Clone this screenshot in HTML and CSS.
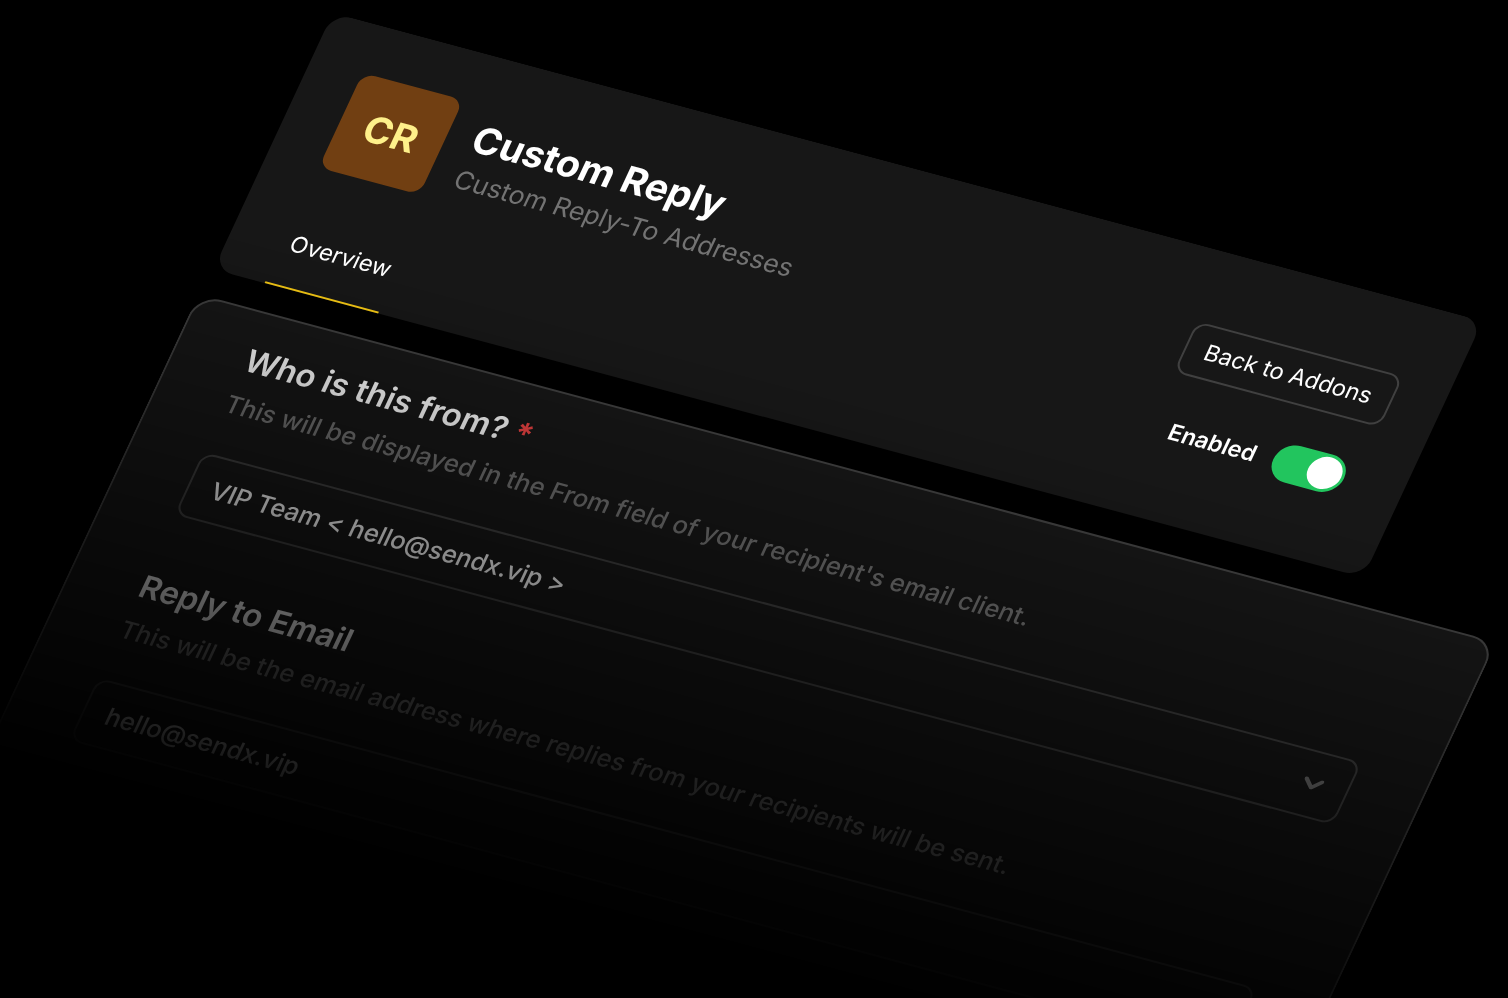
FILE: index.html
```html
<!DOCTYPE html>
<html lang="en">
<head>
  <meta charset="UTF-8">
  <title>Custom Reply</title>
  <link rel="stylesheet" href="styles.css">
</head>
<body>
  <main class="scene">
    <header class="addon">
      <div class="addon-main">
        <div class="addon-info">
          <div class="logo">CR</div>
          <div>
            <h1>Custom Reply</h1>
            <p class="tagline">Custom Reply-To Addresses</p>
          </div>
        </div>
        <nav class="tabs">
          <a class="tab" href="#overview">Overview</a>
        </nav>
      </div>
      <div class="addon-actions">
        <button class="back" type="button">Back to Addons</button>
        <div class="enable">
          <label for="enabled">Enabled</label>
          <input class="switch" type="checkbox" id="enabled" checked>
        </div>
      </div>
    </header>

    <form class="panel" id="overview">
      <div class="field">
        <label for="from">Who is this from? <span class="required">*</span></label>
        <p class="hint">This will be displayed in the From field of your recipient's email client.</p>
        <div class="select">
          <select id="from">
            <option>VIP Team &lt; hello@sendx.vip &gt;</option>
          </select>
          <svg class="chevron" viewBox="0 0 20 12" aria-hidden="true">
            <path d="M2 2l8 8 8-8" />
          </svg>
        </div>
      </div>
      <div class="field">
        <label for="reply">Reply to Email</label>
        <p class="hint">This will be the email address where replies from your recipients will be sent.</p>
        <input class="text" type="text" id="reply" value="hello@sendx.vip">
      </div>
    </form>
  </main>
</body>
</html>
```
FILE: styles.css
```css
* {
  box-sizing: border-box;
}

body {
  height: 100vh;
  margin: 0;
  padding: 12px 0 0 330px;
  overflow: hidden;
  background: #000;
  color: #fff;
  font-family: Inter, "Liberation Sans", sans-serif;
}

h1,
p {
  margin: 0;
}

input,
select,
button {
  font-family: inherit;
}

/* tilted plane, fades out towards the bottom */
.scene {
  width: calc(100vw - 169px);
  transform: rotate(20deg) skew(-5deg, -5deg);
  transform-origin: 0 0;
  -webkit-mask-image: linear-gradient(#000 235px, transparent 815px);
  mask-image: linear-gradient(#000 235px, transparent 815px);
}

/* header card */
.addon {
  display: flex;
  justify-content: space-between;
  margin: 0 150px 28px 3px;
  padding: 0 49px 0 53px;
  border-radius: 20px;
  background: #171717;
}

.addon-info {
  display: flex;
  align-items: center;
  gap: 26px;
  padding-top: 51px;
}

.logo {
  display: flex;
  align-items: center;
  justify-content: center;
  width: 104px;
  height: 104px;
  border-radius: 13px;
  background: #713f12;
  color: #fef08a;
  font-size: 38px;
  font-weight: 700;
}

h1 {
  font-size: 38px;
  line-height: 52px;
  font-weight: 700;
}

.tagline {
  color: #737373;
  font-size: 26px;
  line-height: 37px;
}

.tabs {
  display: flex;
  margin-top: 36px;
}

.tab {
  padding: 29px 7px 27px;
  border-bottom: 2px solid #facc15;
  color: #fff;
  font-size: 23px;
  line-height: 33px;
  text-decoration: none;
}

.addon-actions {
  display: flex;
  flex-direction: column;
  align-items: flex-end;
  gap: 39px;
  padding-top: 75px;
}

.back {
  height: 56px;
  padding: 0 19px;
  border: 2px solid #404040;
  border-radius: 13px;
  background: none;
  color: #fff;
  font-size: 23px;
}

.enable {
  display: flex;
  align-items: center;
  gap: 18px;
  padding-right: 11px;
  font-size: 23px;
  font-weight: 600;
}

.switch {
  display: flex;
  justify-content: flex-end;
  width: 73px;
  height: 40px;
  margin: 0;
  padding: 3px;
  border-radius: 20px;
  background: #22c55e;
  appearance: none;
}

.switch::before {
  content: "";
  width: 34px;
  height: 34px;
  border-radius: 50%;
  background: #fff;
}

/* settings form */
.panel {
  height: 900px;
  padding: 28px 70px;
  border: 2px solid #404040;
  border-radius: 24px;
  background: #171717;
}

.field {
  margin-bottom: 56px;
}

.field label {
  display: block;
  margin-bottom: 3px;
  font-size: 32px;
  line-height: 44px;
  font-weight: 600;
}

.required {
  color: #ef4444;
  font-weight: 700;
}

.hint {
  margin-bottom: 32px;
  color: #737373;
  font-size: 25px;
  line-height: 44px;
  font-weight: 500;
}

.select {
  position: relative;
}

.select select,
.text {
  display: block;
  width: 100%;
  height: 69px;
  padding: 0 22px;
  border: 2px solid #404040;
  border-radius: 13px;
  background: none;
  color: #fff;
  font-size: 25px;
  font-weight: 500;
  appearance: none;
}

.chevron {
  position: absolute;
  top: 28px;
  right: 26px;
  width: 20px;
  height: 12px;
  fill: none;
  stroke: #737373;
  stroke-width: 4;
  stroke-linecap: round;
  stroke-linejoin: round;
}
```
